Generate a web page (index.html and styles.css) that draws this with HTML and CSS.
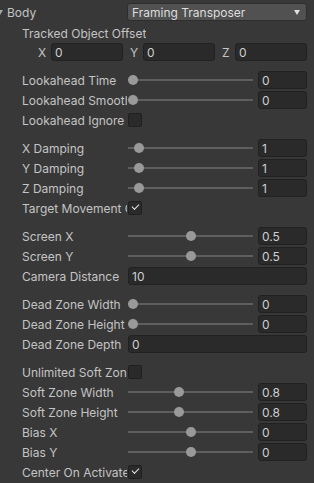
FILE: index.html
```html
<!DOCTYPE html>
<html>
<head>
<meta charset="utf-8">
<link rel="stylesheet" href="styles.css">
</head>
<body>
<div class="panel">
  <div class="row head">
    <div class="fold"><span class="tri"></span><span>Body</span></div>
    <div class="dropdown"><span>Framing Transposer</span><span class="arrow"></span></div>
  </div>
  <div class="row sub"><div class="label">Tracked Object Offset</div></div>
  <div class="row xyz">
    <span class="axis">X</span><div class="field">0</div>
    <span class="axis">Y</span><div class="field">0</div>
    <span class="axis">Z</span><div class="field">0</div>
  </div>

  <div class="group">
    <div class="row"><div class="label">Lookahead Time</div><div class="slider"><div class="track"><span class="thumb" style="--v:0"></span></div><div class="field num">0</div></div></div>
    <div class="row"><div class="label">Lookahead Smoothing</div><div class="slider"><div class="track"><span class="thumb" style="--v:0"></span></div><div class="field num">0</div></div></div>
    <div class="row"><div class="label">Lookahead Ignore Y</div><div class="check"></div></div>
  </div>

  <div class="group">
    <div class="row"><div class="label">X Damping</div><div class="slider"><div class="track"><span class="thumb" style="--v:0.05"></span></div><div class="field num">1</div></div></div>
    <div class="row"><div class="label">Y Damping</div><div class="slider"><div class="track"><span class="thumb" style="--v:0.05"></span></div><div class="field num">1</div></div></div>
    <div class="row"><div class="label">Z Damping</div><div class="slider"><div class="track"><span class="thumb" style="--v:0.05"></span></div><div class="field num">1</div></div></div>
    <div class="row"><div class="label">Target Movement Only</div><div class="check on"></div></div>
  </div>

  <div class="group">
    <div class="row"><div class="label">Screen X</div><div class="slider"><div class="track"><span class="thumb" style="--v:0.5"></span></div><div class="field num">0.5</div></div></div>
    <div class="row"><div class="label">Screen Y</div><div class="slider"><div class="track"><span class="thumb" style="--v:0.5"></span></div><div class="field num">0.5</div></div></div>
    <div class="row"><div class="label">Camera Distance</div><div class="field wide">10</div></div>
  </div>

  <div class="group">
    <div class="row"><div class="label">Dead Zone Width</div><div class="slider"><div class="track"><span class="thumb" style="--v:0"></span></div><div class="field num">0</div></div></div>
    <div class="row"><div class="label">Dead Zone Height</div><div class="slider"><div class="track"><span class="thumb" style="--v:0"></span></div><div class="field num">0</div></div></div>
    <div class="row"><div class="label">Dead Zone Depth</div><div class="field wide">0</div></div>
  </div>

  <div class="group">
    <div class="row"><div class="label">Unlimited Soft Zone</div><div class="check"></div></div>
    <div class="row"><div class="label">Soft Zone Width</div><div class="slider"><div class="track"><span class="thumb" style="--v:0.4"></span></div><div class="field num">0.8</div></div></div>
    <div class="row"><div class="label">Soft Zone Height</div><div class="slider"><div class="track"><span class="thumb" style="--v:0.4"></span></div><div class="field num">0.8</div></div></div>
    <div class="row"><div class="label">Bias X</div><div class="slider"><div class="track"><span class="thumb" style="--v:0.5"></span></div><div class="field num">0</div></div></div>
    <div class="row"><div class="label">Bias Y</div><div class="slider"><div class="track"><span class="thumb" style="--v:0.5"></span></div><div class="field num">0</div></div></div>
    <div class="row"><div class="label">Center On Activate</div><div class="check on"></div></div>
  </div>
</div>
</body>
</html>
```

FILE: styles.css
```css
html, body {
  margin: 0;
  padding: 0;
  background: #383838;
}
body {
  width: 314px;
  height: 483px;
  overflow: hidden;
  font-family: Inter, "Noto Sans", sans-serif;
  font-size: 12px;
  color: #c4c4c4;
}
.panel {
  padding-top: 3px;
  display: flex;
  flex-direction: column;
}
.row {
  display: flex;
  align-items: center;
  height: 18px;
  margin-bottom: 2px;
}
.head {
  margin-bottom: 3px;
}
.fold {
  width: 127px;
  display: flex;
  align-items: center;
}
.tri {
  width: 0;
  height: 0;
  border-left: 3.5px solid transparent;
  border-right: 3.5px solid transparent;
  border-top: 5px solid #a8a8a8;
  margin-left: -3px;
  margin-right: 4px;
}
.dropdown {
  height: 16px;
  background: #515151;
  border: 1px solid #2e2e2e;
  border-radius: 3px;
  display: flex;
  align-items: center;
  justify-content: space-between;
  padding: 0 0 0 4px;
  box-sizing: content-box;
  width: 174px;
  color: #dedede;
}
.arrow {
  width: 0;
  height: 0;
  border-left: 3.5px solid transparent;
  border-right: 3.5px solid transparent;
  border-top: 5px solid #e0e0e0;
  margin-right: 6px;
}
.sub {
  margin-bottom: 1px;
}
.sub .label {
  width: auto;
}
.label {
  width: 105px;
  padding-left: 22px;
  white-space: nowrap;
  overflow: hidden;
  flex: none;
}
.xyz {
  padding-left: 38px;
  margin-bottom: 10px;
}
.axis {
  width: 13px;
  flex: none;
}
.xyz .axis + .field {
  width: 72px;
  margin-right: 7px;
}
.xyz .field:last-child {
  margin-right: 0;
}
.field {
  height: 18px;
  box-sizing: border-box;
  background: #2a2a2a;
  border: 1px solid #212121;
  border-radius: 3px;
  padding-left: 3px;
  display: flex;
  align-items: center;
  color: #d0d0d0;
  flex: none;
}
.group {
  display: flex;
  flex-direction: column;
  margin-bottom: 8px;
}
.slider {
  display: flex;
  align-items: center;
  width: 179px;
  height: 18px;
  margin-left: 1px;
}
.track {
  position: relative;
  width: 125px;
  height: 2px;
  background: #5e5e5e;
  flex: none;
}
.thumb {
  position: absolute;
  top: -4px;
  left: calc(var(--v, 0) * 115px);
  width: 10px;
  height: 10px;
  border-radius: 50%;
  background: #999999;
}
.num {
  width: 49px;
  margin-left: 5px;
}
.wide {
  width: 179px;
  margin-left: 1px;
}
.check {
  width: 14px;
  height: 14px;
  box-sizing: border-box;
  margin-left: 1px;
  background: #2a2a2a;
  border: 1px solid #202020;
  border-radius: 2px;
  position: relative;
}
.check.on::after {
  content: "";
  position: absolute;
  left: 3px;
  top: 2px;
  width: 6px;
  height: 3px;
  border-left: 1.6px solid #e8e8e8;
  border-bottom: 1.6px solid #e8e8e8;
  transform: rotate(-45deg);
}
```
